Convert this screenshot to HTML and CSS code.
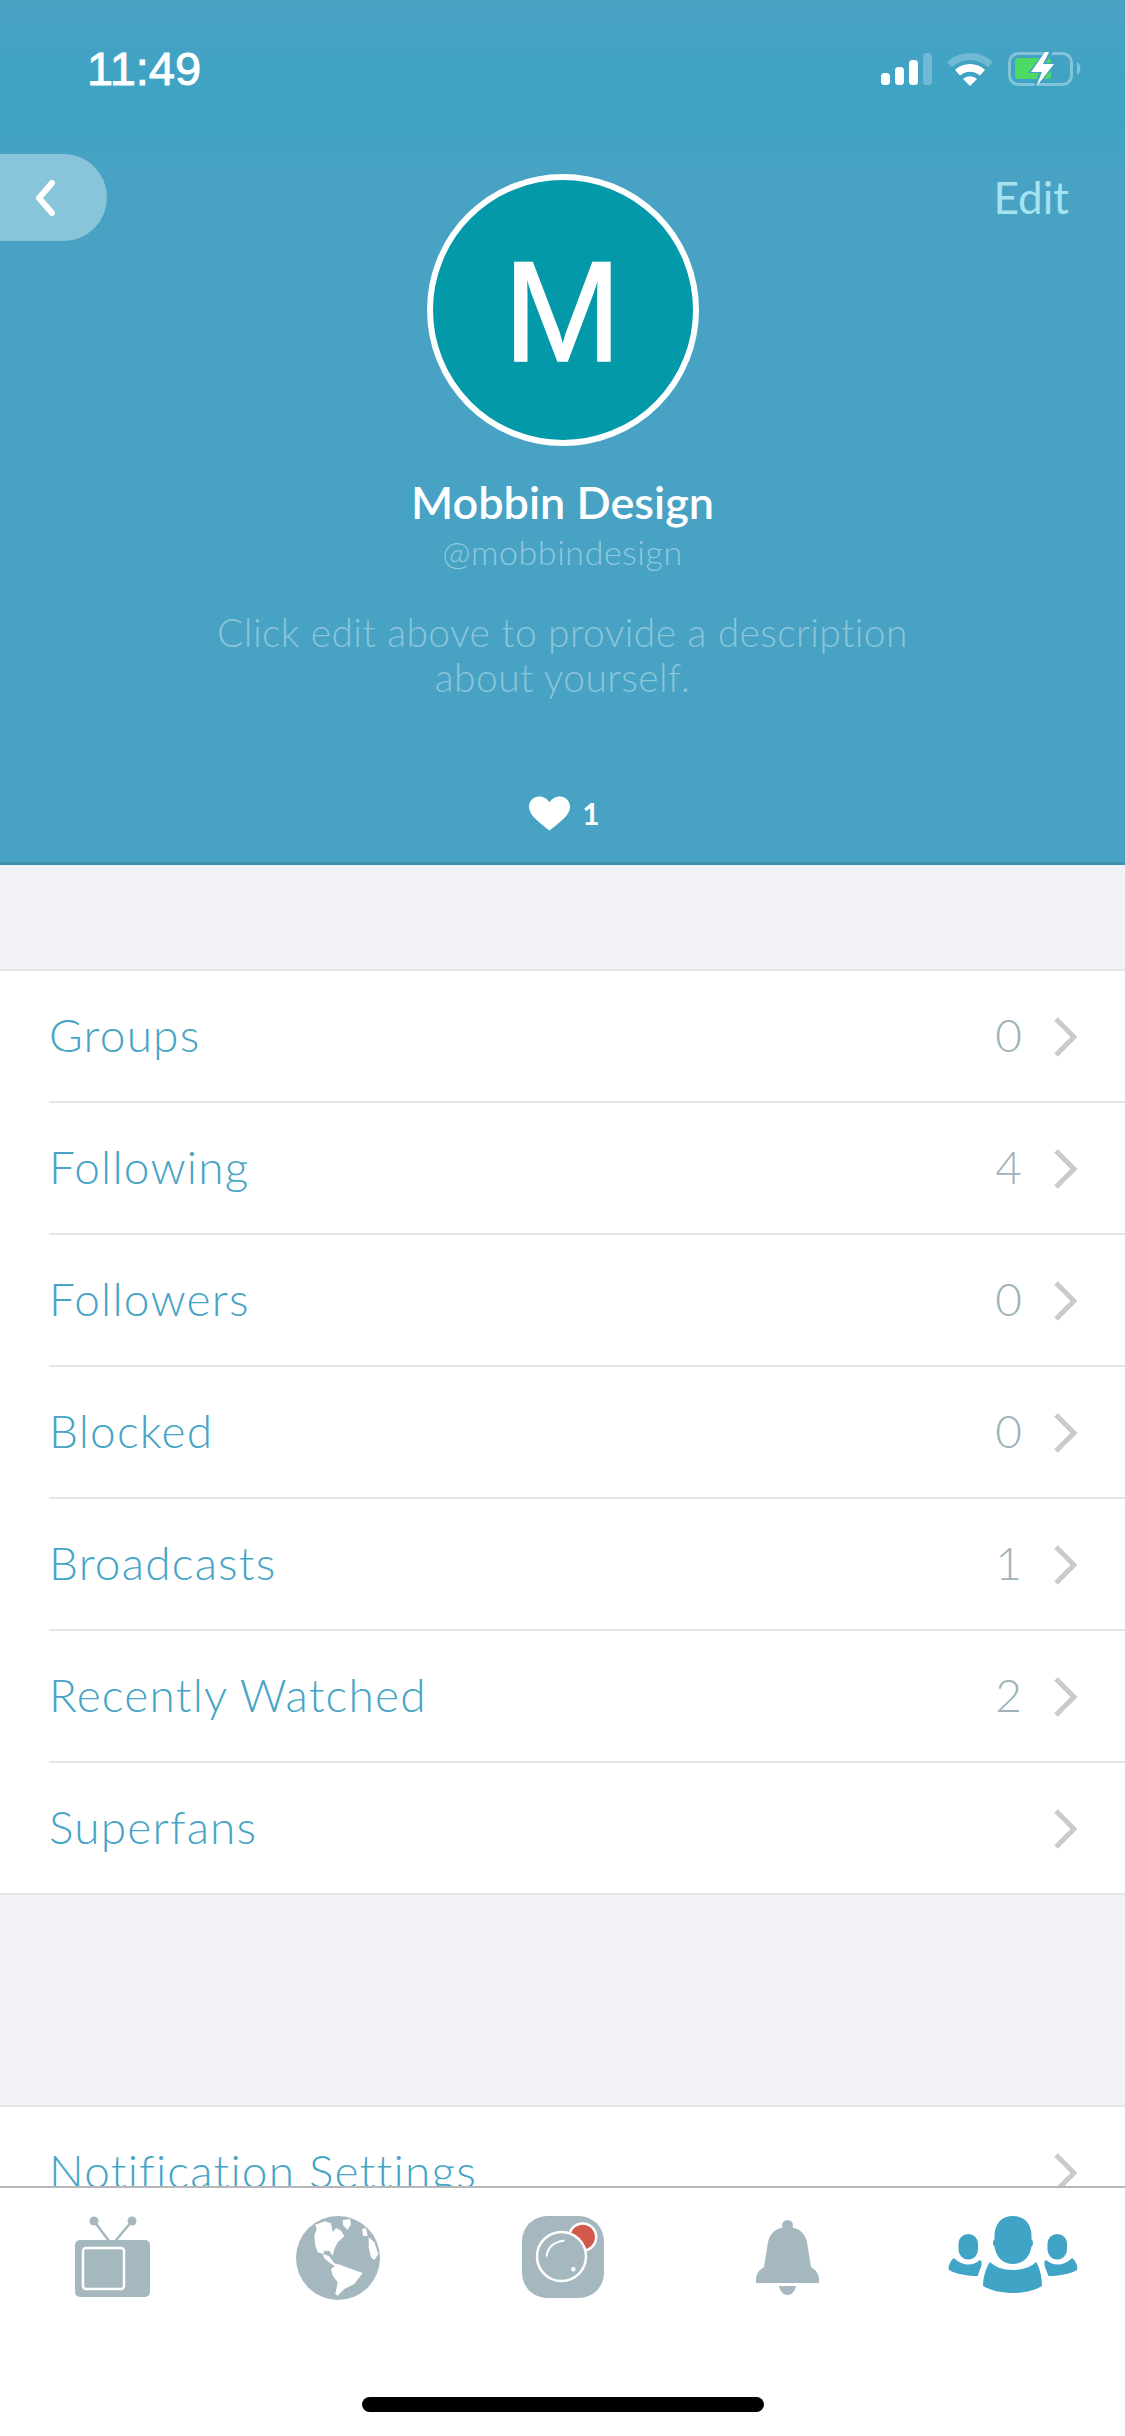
FILE: index.html
```html
<!DOCTYPE html>
<html lang="en">
<head>
<meta charset="utf-8">
<title>Profile</title>
<link rel="stylesheet" href="styles.css">
</head>
<body>
<div class="phone">
  <header class="hero">
    <div class="status">
      <span class="time">11:49</span>
      <svg class="status-icons" width="200" height="34" viewBox="881 52 200 34">
        <rect x="881" y="73" width="9" height="12" rx="3.5" fill="#fff"/>
        <rect x="895" y="67" width="9" height="18" rx="3.5" fill="#fff"/>
        <rect x="909" y="60" width="9" height="25" rx="3.5" fill="#fff"/>
        <rect x="923" y="53" width="9" height="32" rx="3.5" fill="#fff" opacity=".25"/>
        <path d="M947 62a34 34 0 0 1 46 0l-5 5a27 27 0 0 0-36 0z" fill="#fff" opacity=".25"/>
        <path d="M955 70a22 22 0 0 1 30 0l-5 5.500a15 15 0 0 0-20 0z" fill="#fff"/>
        <path d="M963 79a10 10 0 0 1 14 0l-7 7z" fill="#fff"/>
        <rect x="1009.500" y="53.500" width="62" height="31" rx="9" fill="none" stroke="#fff" stroke-opacity=".35" stroke-width="3"/>
        <path d="M1077 62a8 8 0 0 1 0 13z" fill="#fff" opacity=".35"/>
        <rect x="1015" y="58" width="36" height="21" rx="3" fill="#4cd964"/>
        <path d="M1046 50l-18 23h11l-7 18 26-28h-12l8-13z" fill="#47a2c3"/>
        <path d="M1045 52l-14 20h11l-6 15 18-23h-11l6-12z" fill="#fff"/>
      </svg>
    </div>
    <div class="profile">
      <a class="back" href="#" aria-label="Back">
        <svg width="22" height="36" viewBox="0 0 22 36"><path d="M18 3L5 18l13 15" fill="none" stroke="#fff" stroke-width="6" stroke-linecap="round" stroke-linejoin="round"/></svg>
      </a>
      <div class="identity">
        <div class="avatar">M</div>
        <h1 class="name">Mobbin Design</h1>
        <p class="handle">@mobbindesign</p>
        <p class="bio">Click edit above to provide a description<br>about yourself.</p>
        <div class="likes">
          <svg width="41" height="35" viewBox="0 0 42 35"><path d="M21 35C9 25 0 19 0 10.500 0 4.500 4.500 0 10.500 0 15 0 19 2.500 21 6 23 2.500 27 0 31.500 0 37.500 0 42 4.500 42 10.500 42 19 33 25 21 35z" fill="#fff"/></svg>
          <span>1</span>
        </div>
      </div>
      <a class="edit" href="#">Edit</a>
    </div>
  </header>

  <main class="content">
    <ul class="group">
      <li class="row"><span class="label">Groups</span><span class="count">0</span><svg class="chev" width="24" height="40" viewBox="0 0 24 40"><path d="M3 2l18 18L3 38" fill="none" stroke="#c8cace" stroke-width="5"/></svg></li>
      <li class="row"><span class="label">Following</span><span class="count">4</span><svg class="chev" width="24" height="40" viewBox="0 0 24 40"><path d="M3 2l18 18L3 38" fill="none" stroke="#c8cace" stroke-width="5"/></svg></li>
      <li class="row"><span class="label">Followers</span><span class="count">0</span><svg class="chev" width="24" height="40" viewBox="0 0 24 40"><path d="M3 2l18 18L3 38" fill="none" stroke="#c8cace" stroke-width="5"/></svg></li>
      <li class="row"><span class="label">Blocked</span><span class="count">0</span><svg class="chev" width="24" height="40" viewBox="0 0 24 40"><path d="M3 2l18 18L3 38" fill="none" stroke="#c8cace" stroke-width="5"/></svg></li>
      <li class="row"><span class="label">Broadcasts</span><span class="count">1</span><svg class="chev" width="24" height="40" viewBox="0 0 24 40"><path d="M3 2l18 18L3 38" fill="none" stroke="#c8cace" stroke-width="5"/></svg></li>
      <li class="row"><span class="label">Recently Watched</span><span class="count">2</span><svg class="chev" width="24" height="40" viewBox="0 0 24 40"><path d="M3 2l18 18L3 38" fill="none" stroke="#c8cace" stroke-width="5"/></svg></li>
      <li class="row"><span class="label">Superfans</span><svg class="chev" width="24" height="40" viewBox="0 0 24 40"><path d="M3 2l18 18L3 38" fill="none" stroke="#c8cace" stroke-width="5"/></svg></li>
    </ul>
    <ul class="group second">
      <li class="row"><span class="label">Notification Settings</span><svg class="chev" width="24" height="40" viewBox="0 0 24 40"><path d="M3 2l18 18L3 38" fill="none" stroke="#c8cace" stroke-width="5"/></svg></li>
    </ul>
  </main>

  <nav class="tabbar">
    <div class="tabs">
      <div class="tab">
        <svg width="76" height="82" viewBox="0 0 76 82">
          <circle cx="19" cy="5" r="4.500" fill="#a6b8bf"/><circle cx="57" cy="5" r="4.500" fill="#a6b8bf"/>
          <path d="M19 5l18 24L57 5" fill="none" stroke="#a6b8bf" stroke-width="2.500"/>
          <rect x="0" y="24" width="75" height="57" rx="5" fill="#a6b8bf"/>
          <rect x="8" y="32" width="41" height="41" rx="3" fill="none" stroke="#fff" stroke-width="2.500"/>
        </svg>
      </div>
      <div class="tab">
        <svg width="84" height="84" viewBox="0 0 84 84">
          <circle cx="42" cy="42" r="42" fill="#a6b8bf"/>
          <path d="M19.300 8.700L29.300 5.300 35 7.300 36.700 16.300 40 12 45 14.700 48.300 20.300 41.700 26.300 38.300 33 36.700 39.700 33.300 34.700 28.300 34.700 27.300 38 21.700 36.300 19.300 29.700 18.300 19.700 20.700 13z" fill="#fff"/>
          <path d="M27 38l6 2 5 7 8 4-4 1-8-5-6-5z" fill="#fff"/>
          <path d="M35 53l6.700-5 11.600 4.300 13.400 4.700-8.400 11-10 5-6.600 6.700-2.400-1.700 2.400-11.700-5-6.600z" fill="#fff"/>
          <path d="M46.700 4L54 3l1 5-3.300 5.700-4.400-4z" fill="#fff"/>
          <path d="M66 13l4-1 1.700 7.700-4.400.6z" fill="#fff"/>
          <path d="M72.700 21.300l5.600 5 4 11.700-4 6-3.300-2.700-2.300-10z" fill="#fff"/>
        </svg>
      </div>
      <div class="tab">
        <svg width="82" height="82" viewBox="0 0 82 82">
          <rect width="82" height="82" rx="25" fill="#a6b8bf"/>
          <circle cx="60.700" cy="21" r="13.500" fill="#d35a4b" stroke="#fff" stroke-width="2.500"/>
          <circle cx="39.500" cy="40.500" r="24.500" fill="#a6b8bf" stroke="#fff" stroke-width="2.500"/>
          <path d="M24.700 39.700c1-8 7-14 17-15" fill="none" stroke="#fff" stroke-width="2" stroke-linecap="round"/>
          <circle cx="51.300" cy="53.300" r="2.200" fill="#fff"/>
        </svg>
      </div>
      <div class="tab">
        <svg width="63" height="75" viewBox="0 0 63 75">
          <circle cx="31.500" cy="5.500" r="5.500" fill="#a6b8bf"/>
          <path d="M12 22C14 12 22 7 31.500 7S49 12 51 22L55 47C60 50 63 54 63 60V63H0V60C0 54 3 50 8 47Z" fill="#a6b8bf"/>
          <path d="M23 66H40C39 72 35 75 31.500 75S24 72 23 66Z" fill="#a6b8bf"/>
        </svg>
      </div>
      <div class="tab">
        <svg width="130" height="78" viewBox="0 0 130 78">
          <path d="M46.500 19C47 7 54 0 65 0s18 7 18.500 19v4.500c2 1 2 6 0 7C82 41 75 48 65 48s-17-7-18.500-17.500c-2-1-2-6 0-7z" fill="#3fa4c5"/>
          <path d="M42 46c5 5 13 8 23 8s18-3 23-8c3 4 6 14 6 24-8 5-19 7-29 7s-21-2-30-7c0-10 4-20 7-24z" fill="#3fa4c5"/>
          <rect x="10.500" y="18" width="19.500" height="25.500" rx="9.700" fill="#3fa4c5"/>
          <rect x="99.500" y="18" width="19.500" height="25.500" rx="9.700" fill="#3fa4c5"/>
          <path d="M6 42c4 4 9 6.500 14 6.500s8-1.500 12-4.500c2 1 2 4 1 7l-3.500 9C20 60 8 58 1 54-.5 50 3 44 6 42z" fill="#3fa4c5"/>
          <path d="M124 42c-4 4-9 6.500-14 6.500s-8-1.500-12-4.500c-2 1-2 4-1 7l3.500 9c9.500 0 21.500-2 28.500-6 1.500-4-2-10-5-12z" fill="#3fa4c5"/>
        </svg>
      </div>
    </div>
    <div class="home-indicator"></div>
  </nav>
</div>
</body>
</html>
```
FILE: styles.css
```css
* { box-sizing: border-box; }
html, body { margin: 0; padding: 0; background: #f0f2f5; }
.phone {
  position: relative;
  width: 1125px;
  height: 2436px;
  overflow: hidden;
  background: #f0f2f5;
  font-family: "Lato", "Open Sans", sans-serif;
}
.hero {
  height: 865px;
  background: linear-gradient(180deg, #4aa2c3 0, #3fa3c4 85px, #3fa3c4 115px, #48a2c3 175px, #48a2c3 100%);
  border-bottom: 3px solid #3f92ae;
  color: #fff;
}
.status {
  height: 154px;
  display: flex;
  justify-content: space-between;
  align-items: flex-start;
  padding: 52px 44px 0 87px;
}
.time {
  font-family: "Liberation Sans", Arial, sans-serif;
  font-size: 47px;
  line-height: 34px;
  font-weight: 400;
  -webkit-text-stroke: .9px #fff;
}
.status-icons { display: block; }
.profile {
  display: grid;
  grid-template-columns: 1fr auto 1fr;
  align-items: start;
}
.back {
  width: 107px;
  height: 87px;
  background: #88c5da;
  border-radius: 0 44px 44px 0;
  display: flex;
  align-items: center;
  padding-left: 34px;
}
.back svg { display: block; }
.edit {
  justify-self: end;
  margin: 18px 56px 0 0;
  font-size: 44px;
  line-height: 50px;
  font-weight: 400;
  color: #a5e3f0;
  text-decoration: none;
}
.identity {
  display: flex;
  flex-direction: column;
  align-items: center;
  padding-top: 20px;
  text-align: center;
}
.avatar {
  width: 272px;
  height: 272px;
  border-radius: 50%;
  border: 6px solid #fff;
  background: #0399a9;
  color: #fff;
  font-family: "Liberation Sans", Arial, sans-serif;
  font-size: 142px;
  line-height: 264px;
  -webkit-text-stroke: 1.5px #fff;
}
.name {
  margin: 31px 0 0;
  font-size: 45px;
  line-height: 50px;
  font-weight: 600;
}
.handle {
  margin: 5px 0 0;
  font-size: 34px;
  line-height: 40px;
  font-weight: 300;
  letter-spacing: .6px;
  color: #8fc9dd;
}
.bio {
  margin: 38px 0 0;
  font-size: 39px;
  line-height: 45px;
  font-weight: 300;
  letter-spacing: .4px;
  color: #8ac5d9;
}
.likes {
  display: flex;
  align-items: center;
  gap: 12px;
  margin: 96px 0 0 4px;
}
.likes svg { display: block; }
.likes span { font-size: 30px; font-weight: 700; line-height: 35px; }

.content { padding-top: 104px; }
.group {
  list-style: none;
  margin: 0;
  padding: 0 0 0 49px;
  background: #fff;
  border-top: 2px solid #e4e5e8;
  border-bottom: 2px solid #e4e5e8;
}
.group.second { margin-top: 210px; }
.row {
  height: 132px;
  display: flex;
  align-items: center;
  padding-right: 48px;
  border-bottom: 2px solid #e4e5e8;
}
.row:last-child { border-bottom: 0; height: 130px; }
.label {
  flex: 1;
  padding-bottom: 3px;
  font-size: 46px;
  font-weight: 300;
  letter-spacing: 1.2px;
  color: #46a4c6;
}
.count {
  padding-bottom: 3px;
  font-size: 46px;
  font-weight: 300;
  color: #9fb2b9;
  margin-right: 31px;
}
.chev { display: block; margin-top: 2px; }

.tabbar {
  position: absolute;
  left: 0;
  right: 0;
  bottom: 0;
  height: 250px;
  background: #fff;
  border-top: 2px solid #b5b7b8;
}
.tabs {
  display: grid;
  grid-template-columns: repeat(5, 225px);
  height: 125px;
  padding-top: 28px;
}
.tab { display: flex; justify-content: center; align-items: flex-start; }
.tab:nth-child(4) { padding-top: 4px; }
.tab svg { display: block; }
.home-indicator {
  width: 402px;
  height: 15px;
  margin: 84px auto 0;
  border-radius: 8px;
  background: #000;
}
```
